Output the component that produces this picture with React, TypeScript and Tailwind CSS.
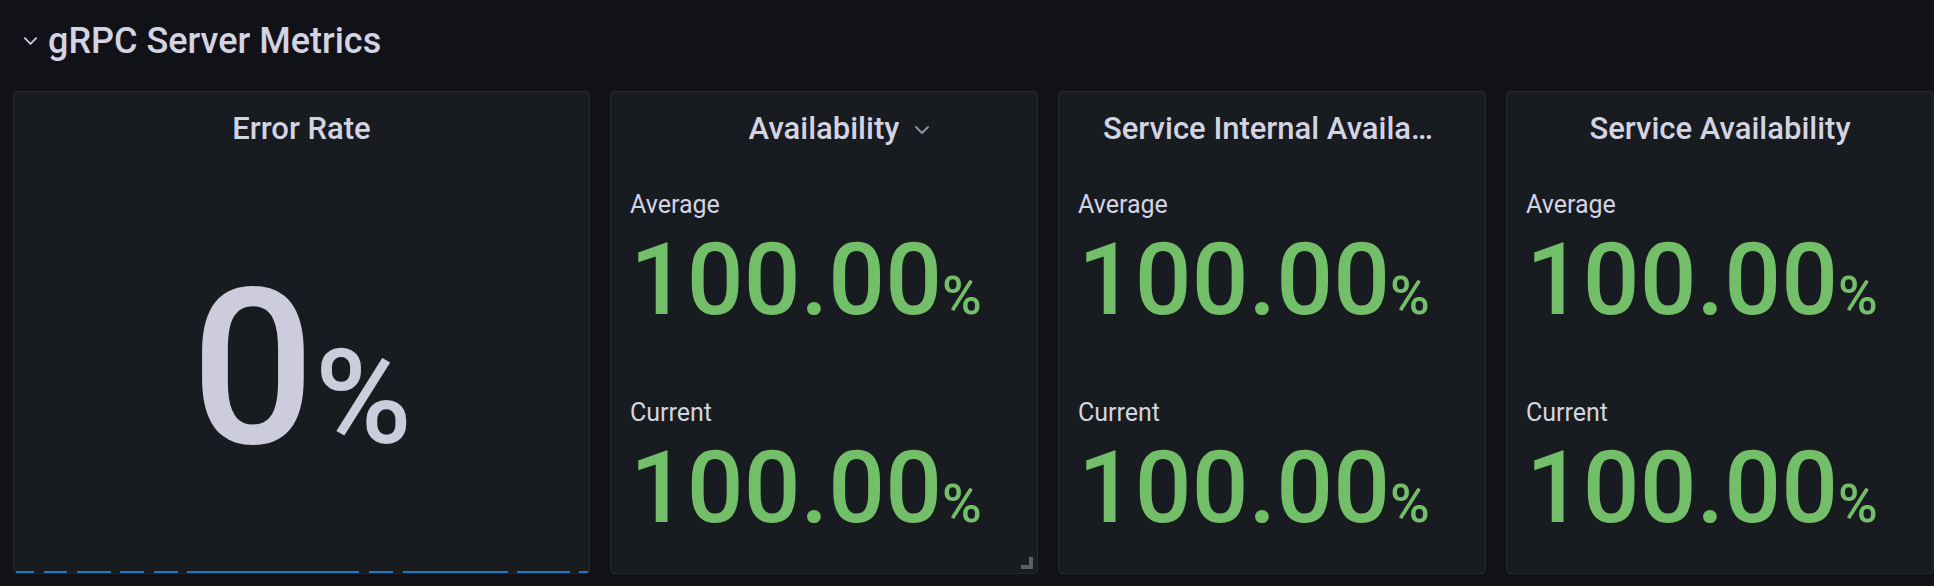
import React from 'react';

type Stat = {
  label: string;
  value: string;
};

type PanelProps = {
  title: string;
  menu?: boolean;
  resizable?: boolean;
  stats: Stat[];
};

// sparkline segments under the error rate (x from panel left, in px)
const sparkSegments: [number, number][] = [
  [2, 20],
  [30, 53],
  [63, 97],
  [106, 130],
  [140, 164],
  [173, 345],
  [355, 379],
  [389, 494],
  [503, 556],
  [565, 575],
];

function ChevronDown({ className }: { className?: string }) {
  return (
    <svg viewBox="0 0 16 10" className={className} fill="none">
      <polyline
        points="2,2 8,8 14,2"
        stroke="currentColor"
        strokeWidth="2"
        strokeLinecap="round"
        strokeLinejoin="round"
      />
    </svg>
  );
}

function PanelTitle({ title, menu }: { title: string; menu?: boolean }) {
  return (
    <div className="pt-[19px] px-[44px] text-center">
      <div className="relative inline-block max-w-full align-top">
        <div className="truncate text-[31px] leading-[36px] font-medium text-[#d3d3e2]">
          {title}
        </div>
        {menu && (
          <ChevronDown className="absolute left-full top-[14px] ml-[15px] w-[16px] h-[10px] text-[#8e8f99]" />
        )}
      </div>
    </div>
  );
}

function StatPanel({ title, menu, resizable, stats }: PanelProps) {
  return (
    <div className="relative h-[483px] rounded-[4px] border border-[#25282d] bg-[#181b1f]">
      <PanelTitle title={title} menu={menu} />
      <div className="px-[19px]">
        {stats.map((stat, i) => (
          <div key={stat.label} className={i === 0 ? 'mt-[44px]' : 'mt-[69px]'}>
            <div className="text-[25px] leading-[28px] text-[#d3d3e2]">{stat.label}</div>
            <div className="mt-[11px] whitespace-nowrap text-[100px] leading-none font-medium text-[#73bf69]">
              {stat.value}
              <span className="text-[54px]">%</span>
            </div>
          </div>
        ))}
      </div>
      {resizable && (
        <div className="absolute right-[4px] bottom-[4px] w-[12px] h-[12px] border-r-[4px] border-b-[4px] border-[#5c5f64]" />
      )}
    </div>
  );
}

function ErrorRatePanel() {
  return (
    <div className="relative h-[483px] overflow-hidden rounded-[4px] border border-[#25282d] bg-[#181b1f]">
      <PanelTitle title="Error Rate" />
      <div className="mt-[113px] text-center whitespace-nowrap text-[218px] leading-none font-medium text-[#ccccdc]">
        0<span className="text-[132px]">%</span>
      </div>
      <svg className="absolute left-0 bottom-0 w-full h-[2px]" preserveAspectRatio="none">
        {sparkSegments.map(([a, b]) => (
          <line key={a} x1={a} x2={b} y1="1" y2="1" stroke="#1f78c1" strokeWidth="2" />
        ))}
      </svg>
    </div>
  );
}

const availability: Stat[] = [
  { label: 'Average', value: '100.00' },
  { label: 'Current', value: '100.00' },
];

export default function App() {
  return (
    <div className="w-[1934px] h-[586px] overflow-hidden bg-[#111217] font-['Roboto',sans-serif]">
      <div className="flex h-[62px] items-center pl-[23px] pt-[20px]">
        <ChevronDown className="w-[15px] h-[10px] text-[#ccccdc]" />
        <h1 className="ml-[10px] text-[36px] leading-[42px] font-medium text-[#d3d3e2]">
          gRPC Server Metrics
        </h1>
      </div>
      <div className="grid grid-cols-[577px_428px_428px_428px] gap-x-[20px] pl-[13px] pt-[29px]">
        <ErrorRatePanel />
        <StatPanel title="Availability" menu resizable stats={availability} />
        <StatPanel title="Service Internal Availability" stats={availability} />
        <StatPanel title="Service Availability" stats={availability} />
      </div>
    </div>
  );
}
